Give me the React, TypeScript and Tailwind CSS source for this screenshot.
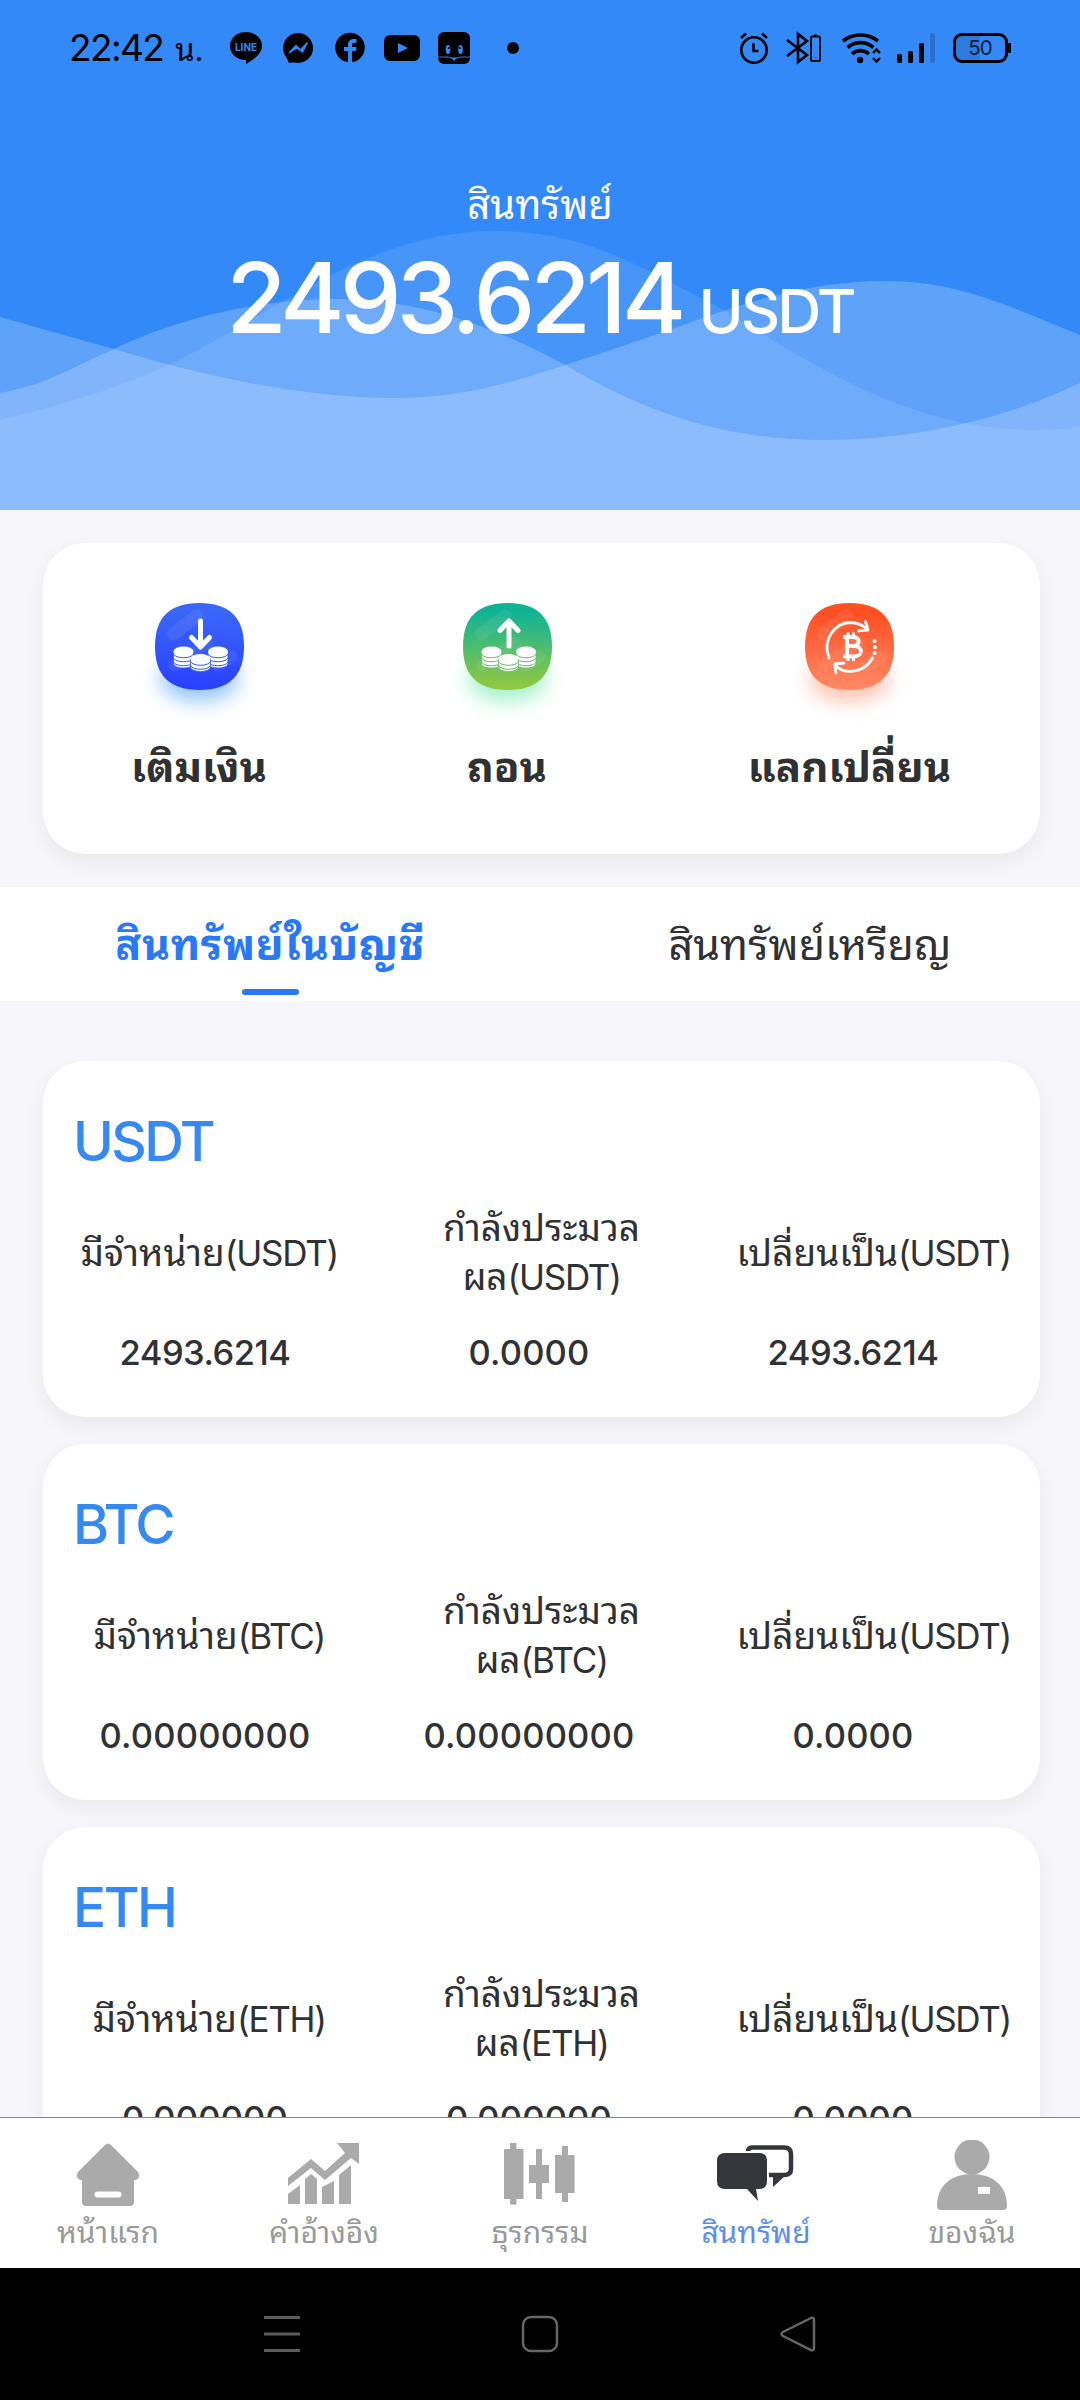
import type { ReactNode } from "react"

interface Coin {
  name: string,
  values: string[]
}

const coins: Coin[] = [
  { name: "USDT", values: ["2493.6214", "0.0000", "2493.6214"] },
  { name: "BTC", values: ["0.00000000", "0.00000000", "0.0000"] },
  { name: "ETH", values: ["0.000000", "0.000000", "0.0000"] },
]

function StatusBar() {
  return (
    <div className="relative flex h-[96px] items-center text-black">
      <div className="ml-[69px] w-[161px] flex items-baseline gap-[12px] whitespace-nowrap">
        <span className="text-[37px] tracking-[-1.6px]">22:42</span>
        <span className="text-[31px]">น.</span>
      </div>
      <svg className="w-[300px] h-[96px] shrink-0" viewBox="230 0 300 96">
        <path d="M246 32c9 0 16 6 16 14 0 8-9 14-16 18v-4c-9 0-16-6-16-14s7-14 16-14z" />
        <text x="246" y="50.500" textAnchor="middle" fontSize="11" fontWeight="700" textLength="22" lengthAdjust="spacingAndGlyphs" fill="#3489f9">LINE</text>
        <circle cx="298" cy="48" r="15" />
        <path d="M284 52l5 11 8-1z" />
        <path d="M289 53l7-7.500 4.500 4.500 7-7.500-5 9.500-5.500-4z" fill="#3489f9" stroke="#3489f9" strokeWidth="1.400" />
        <circle cx="350" cy="47.500" r="14.800" />
        <path d="M348 63V51h-4v-4h4v-2c0-5 3-6.500 8.500-6v3.800c-3.500-.2-4.500.4-4.500 2.200V47h4.500l-.7 4H352v12z" fill="#3489f9" />
        <rect x="384" y="35" width="36" height="26" rx="6" />
        <path d="M398 43v10l10-5z" fill="#3489f9" />
        <rect x="438" y="32" width="32" height="32" rx="6" />
        <ellipse cx="448" cy="49.500" rx="2.300" ry="4.500" fill="#3489f9" />
        <ellipse cx="460.500" cy="49.500" rx="2.300" ry="4.500" fill="#3489f9" />
        <circle cx="448.800" cy="48" r="1" />
        <circle cx="459.700" cy="48" r="1" />
        <path d="M438 57h10l6 2 6-2h10" stroke="#3489f9" fill="none" strokeWidth=".9" />
        <path d="M451 57.500h6l-3 3.500z" fill="#3489f9" />
        <circle cx="513" cy="48" r="6" />
      </svg>
      <svg className="ml-[210px] w-[280px] h-[96px] shrink-0" viewBox="740 0 280 96" fill="none" stroke="#000">
        <circle cx="754" cy="50" r="12.700" strokeWidth="2.600" />
        <path d="M753.500 43v8h5" strokeWidth="2.600" />
        <path d="M741 38l5-4.500M767 38l-5-4.500" strokeWidth="2.600" />
        <path d="M787 40l20 15-9 7V34l9 7-20 15" strokeWidth="2.600" />
        <rect x="811" y="36.500" width="9" height="24.500" rx="1" strokeWidth="1.800" />
        <path d="M814 35.500h3" strokeWidth="2" />
        <path d="M814 57.500h3" stroke="#a33a6b" strokeWidth="1" />
        <path d="M843 41c10-8 25-8 35 0M847.500 47.500c8-6.500 18-6.500 26 0M852 54c5-4.500 12-4.500 17 0" strokeWidth="3.600" />
        <circle cx="860" cy="60" r="3.200" fill="#000" stroke="none" />
        <path d="M873 53l3.500-3.500L880 53M873 58l3.500 3.500L880 58" strokeWidth="2.400" />
        <g stroke="none" fill="#000">
          <rect x="897" y="54" width="5" height="9" rx="1.500" />
          <rect x="908" y="51" width="5" height="12" rx="1.500" />
          <rect x="919" y="43" width="5" height="20" rx="1.500" />
          <rect x="930" y="33" width="5" height="30" rx="1.500" fill="#2b6fcb" />
          <rect x="956" y="36" width="24" height="24" fill="#2f7adf" />
          <rect x="1008" y="43" width="3" height="10" rx="1" />
        </g>
        <rect x="954.500" y="34.500" width="52" height="27" rx="7.500" strokeWidth="3" />
        <text x="980" y="55" textAnchor="middle" fontSize="20.500" letterSpacing="-1" fill="#0b1a30" stroke="none">50</text>
      </svg>
    </div>
  )
}

function Waves() {
  return (
    <svg className="absolute inset-0 w-full h-full" viewBox="0 0 1080 510" fill="#fff">
      <path fillOpacity=".1" d="M0 420C70 403 118 388 169 365C280 310 370 231 496 231C590 231 650 273 709 302C780 340 890 430 1036 430Q1060 430 1080 427V510H0z" />
      <path fillOpacity=".21" d="M0 393Q22 389 41 382C70 371 88 360 114 349C170 322 250 299 337 299C430 299 510 335 565 365C630 403 710 440 823 440C920 440 1010 417 1080 383V510H0z" />
      <path fillOpacity=".21" d="M0 317C38 328 75 338 114 349C200 375 300 398 396 398C460 398 515 382 565 365C620 348 665 331 720 312C775 293 830 281 885 281C960 281 1010 307 1080 335V510H0z" />
    </svg>
  )
}

const tile = "M44.500 0C74 0 89 14 89 43.500C89 73 74 87 44.500 87C15 87 0 73 0 43.500C0 14 15 0 44.500 0z"

function Coins({ color }: { color: string }) {
  const stack = (x: number, y: number, rows: number) => (
    <g transform={`translate(${x} ${y})`}>
      <path d={rows === 3 ? "M-10 0v12c0 6 20 6 20 0v-12z" : "M-10 0v8c0 6 20 6 20 0v-8z"} fill="#fff" stroke={color} strokeWidth=".8" />
      <ellipse rx="10" ry="5" fill="#fff" />
      <path d="M-10 2.500c2 5 18 5 20 0M-10 6.500c2 5 18 5 20 0" fill="none" stroke={color} />
      {rows === 3 && <path d="M-10 10.500c2 5 18 5 20 0" fill="none" stroke={color} />}
    </g>
  )
  return (
    <g>
      {stack(28.5, 48.5, 3)}
      {stack(63, 48.5, 3)}
      {stack(45.5, 56, 2)}
    </g>
  )
}

function ActionIcon({ kind, from, to, glow }: { kind: string, from: string, to: string, glow: string }) {
  return (
    <svg className="w-[129px] h-[134px]" viewBox="-20 0 129 134">
      <defs>
        <linearGradient id={kind} x1="0" y1="0" x2="0" y2="1">
          <stop offset=".1" stopColor={from} />
          <stop offset="1" stopColor={to} />
        </linearGradient>
        <filter id={kind + "Glow"} x="-40%" y="-60%" width="180%" height="220%">
          <feGaussianBlur stdDeviation="10" />
        </filter>
      </defs>
      <ellipse cx="44.500" cy="76" rx="39" ry="22" fill={glow} fillOpacity=".85" filter={`url(#${kind}Glow)`} />
      <path d={tile} fill={`url(#${kind})`} />
      <path d="M18 31L42 13M52 40L20 62M62 62L76 54" stroke="#fff" strokeOpacity=".07" strokeWidth="13" strokeLinecap="round" />
      {kind === "deposit" && <path d="M45.500 18v25M36.500 34.500l9 9.500 9-9.500" fill="none" stroke="#fff" strokeWidth="5" strokeLinecap="round" strokeLinejoin="round" />}
      {kind === "withdraw" && <path d="M46 43V19M37 27.500l9-9.500 9 9.500" fill="none" stroke="#fff" strokeWidth="5" strokeLinecap="round" strokeLinejoin="round" />}
      {kind !== "exchange" && <Coins color={kind === "deposit" ? "#2f56fb" : "#62bb63"} />}
      {kind === "exchange" && (
        <g fill="none" stroke="#fff" strokeWidth="2.800" strokeLinecap="round" strokeLinejoin="round">
          <path d="M24 55C17 36 30 20 45 19.500C53 19.500 58 22 63 27M60.500 18.500l2.500 8.500-9.500.8" />
          <path d="M67.500 55C60 69 40 73 30 62M31 70l-1.500-9 9.500-.8" />
          <path d="M38 34h10c7.500 0 7.500 9 0 9H42M38 53.500h11c9 0 9-10.500 0-10.500M42 34v19" strokeWidth="4" strokeLinecap="butt" />
          <path d="M43 29.500v4M48.500 29.500v4M43 54v4M48.500 54v4" strokeWidth="3" strokeLinecap="butt" />
          <path d="M69.500 38h.1M70 44h.1M69.500 50h.1" strokeWidth="4" />
        </g>
      )}
    </svg>
  )
}

function NavIcon({ name }: { name: string }) {
  const icons: Record<string, ReactNode> = {
    home: (
      <g>
        <path d="M37 5Q40 2 43 5L70 32Q72 35 71 37Q70 40 66 40V62Q66 66 62 66H18Q14 66 14 62V40Q10 40 9 37Q8 35 10 32z" />
        <rect x="26.500" y="51.500" width="27" height="6" rx="3" fill="#fff" />
      </g>
    ),
    chart: (
      <g>
        <path d="M4 38L27 19L41 31L61 13L53 3H75V24L67 18L41 40L27 28L4 46z" />
        <path d="M4 54L16 45V64H4zM21 39l6-5 6 5V64H21zM38 47L50 41V64H38zM55 35L67 25V64H55z" />
      </g>
    ),
    trade: <path d="M4 9h6V3h6.500v6h7v50h-7v5.500H10V59H4zM29 25h7V9h6v16h7v18h-7v16h-6V43h-7zM55 15h7V6h6v9h6.500v38H68v9h-6v-9h-7z" />,
    assets: (
      <g fill="#35363c">
        <path d="M9 13H43Q51 13 51 21V41Q51 49 43 49H40L42 61L31 49H9Q1 49 1 41V21Q1 13 9 13z" />
        <path d="M32 11Q32 7.500 37 7.500H68Q75 7.500 75 14V29Q75 35 68 35H53" fill="none" stroke="#35363c" strokeWidth="4.500" />
        <path d="M57 34V47L70 35z" />
      </g>
    ),
    mine: (
      <g>
        <circle cx="40" cy="17" r="17.500" />
        <path d="M5 66C5 45 20 34 40 34S75 45 75 66Q75 70 71 70H9Q5 70 5 66z" />
        <rect x="46" y="47" width="12" height="7" fill="#fff" />
      </g>
    ),
  }
  return (
    <svg className="w-[80px] h-[72px]" viewBox="0 0 80 72" fill="#aaa">{icons[name]}</svg>
  )
}

const actions = [
  { kind: "deposit", label: "เติมเงิน", from: "#3a66f9", to: "#2840ff", glow: "#7db8ff", cls: "w-[312px]" },
  { kind: "withdraw", label: "ถอน", from: "#10b296", to: "#97c93d", glow: "#8ff0c0", cls: "w-[304px]" },
  { kind: "exchange", label: "แลกเปลี่ยน", from: "#ff4e22", to: "#ff8a66", glow: "#ffb5a0", cls: "w-[381px]" },
]

const nav = [
  { name: "home", label: "หน้าแรก" },
  { name: "chart", label: "คำอ้างอิง" },
  { name: "trade", label: "ธุรกรรม" },
  { name: "assets", label: "สินทรัพย์" },
  { name: "mine", label: "ของฉัน" },
]

function Unit({ name }: { name: string }) {
  return <span className="text-[35px] tracking-[-1.3px]">({name})</span>
}

function CoinCard({ name, values }: Coin) {
  return (
    <div className="mb-[27px] h-[356px] shrink-0 rounded-[42px] bg-white shadow-[0_8px_20px_rgba(0,0,0,0.06)]">
      <div className="pl-[30px] pt-[48px] text-[55px] leading-[64px] tracking-[-2.5px] font-medium text-[#3688f2]">{name}</div>
      <div className="mt-[30px] grid h-[98px] grid-cols-3 items-center text-center text-[37px] leading-[49px]">
        <div className="whitespace-nowrap">มีจำหน่าย<Unit name={name} /></div>
        <div>กำลังประมวล<br />ผล<Unit name={name} /></div>
        <div className="whitespace-nowrap">เปลี่ยนเป็น<Unit name="USDT" /></div>
      </div>
      <div className="mt-[27px] flex text-center text-[34.500px] leading-[49px] font-medium">
        {values.map((v, i) => (
          <div key={i} className={v.startsWith("0") ? "w-[324px] tracking-[0.2px]" : "w-[324px] tracking-[-0.5px]"}>{v}</div>
        ))}
      </div>
    </div>
  )
}

export default function App() {
  return (
    <div className="flex h-[2400px] w-[1080px] flex-col overflow-hidden bg-[#f6f6fb] font-['Inter','Noto_Sans_Thai_Looped','Loma','Noto_Sans',sans-serif] text-[#303133]">
      <div className="relative h-[510px] shrink-0 bg-[#3489f9]">
        <Waves />
        <StatusBar />
        <div className="relative flex flex-col items-center text-white">
          <div className="mt-[81px] text-[40px] leading-[56px]">สินทรัพย์</div>
          <div className="mt-[5px] flex items-baseline gap-[17px] font-medium leading-[120px]">
            <span className="text-[98px] tracking-[-4.8px]">2493.6214</span>
            <span className="text-[61px] tracking-[-2.800px]">USDT</span>
          </div>
        </div>
      </div>

      <div className="ml-[43px] mr-[40px] mt-[33px] flex h-[311px] shrink-0 rounded-[42px] bg-white shadow-[0_8px_20px_rgba(0,0,0,0.06)]">
        {actions.map((a) => (
          <div key={a.kind} className={`flex flex-col items-center pt-[60px] ${a.cls}`}>
            <ActionIcon kind={a.kind} from={a.from} to={a.to} glow={a.glow} />
            <div className="text-[42px] leading-[60px] font-bold">{a.label}</div>
          </div>
        ))}
      </div>

      <div className="mt-[33px] flex h-[114px] shrink-0 bg-white text-[43px] leading-[60px]">
        <div className="flex w-1/2 flex-col items-center pt-[27px] font-bold text-[#2979f7]">
          <div className="tracking-[0.6px]">สินทรัพย์ในบัญชี</div>
          <div className="mt-[15px] h-[6px] w-[57px] rounded-full bg-[#2979f7]"></div>
        </div>
        <div className="w-1/2 pt-[27px] text-center">สินทรัพย์เหรียญ</div>
      </div>

      <div className="flex h-[1116px] shrink-0 flex-col overflow-hidden pl-[43px] pt-[60px] pr-[40px]">
        {coins.map((c) => (
          <CoinCard key={c.name} {...c} />
        ))}
      </div>

      <div className="grid h-[151px] shrink-0 grid-cols-5 border-t border-[#888] bg-white">
        {nav.map((n) => (
          <div key={n.name} className="flex flex-col items-center pt-[22px]">
            <NavIcon name={n.name} />
            <div className={n.name === "assets" ? "text-[30px] leading-[40px] text-[#5b8def]" : "text-[30px] leading-[40px] text-[#999]"}>{n.label}</div>
          </div>
        ))}
      </div>

      <div className="h-[132px] shrink-0 bg-black">
        <svg className="w-full h-full" viewBox="0 0 1080 132" fill="none" stroke="#666" strokeWidth="2.500">
          <path d="M264 49.500h36M264 66h36M264 82.500h36" stroke="#5c5c5c" strokeWidth="3" />
          <rect x="523" y="49" width="34" height="34" rx="8" />
          <path d="M811 50L783 64Q780 66 783 68L811 82Q814 83 814 80V52Q814 49 811 50z" />
        </svg>
      </div>
    </div>
  )
}
